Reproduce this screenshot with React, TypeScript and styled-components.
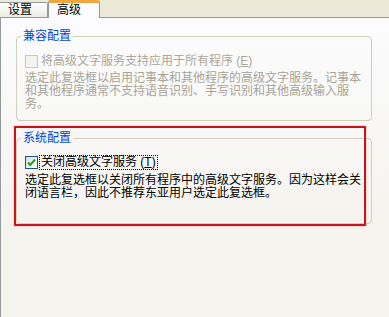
import styled, { createGlobalStyle } from "styled-components";

const GlobalStyle = createGlobalStyle`
  html, body {
    margin: 0;
    padding: 0;
    background: #f4f3ee;
  }
  body {
    font-family: "Liberation Sans", "Noto Sans CJK SC", sans-serif;
    font-size: 12px;
  }
`;

const Window = styled.div`
  width: 389px;
  height: 317px;
  overflow: hidden;
  display: flex;
  flex-direction: column;
  background: #ece9d8;
`;

const TabStrip = styled.div`
  display: flex;
  align-items: flex-end;
  height: 17px;
  border-bottom: 1px solid #919b9c;
  box-sizing: content-box;
`;

interface TabProps {
  $active?: boolean;
}

const Tab = styled.div<TabProps>`
  box-sizing: border-box;
  display: flex;
  align-items: center;
  padding-left: 8px;
  color: #000;
  line-height: 12px;
  border-right: 1px solid #919b9c;
  border-left: ${(p) => (p.$active ? "1px solid #919b9c" : "none")};
  border-top: ${(p) => (p.$active ? "3px solid #f2a640" : "1px solid #919b9c")};
  border-radius: ${(p) => (p.$active ? "2px 2px 0 0" : "0 2px 0 0")};
  width: ${(p) => (p.$active ? "52px" : "48px")};
  height: ${(p) => (p.$active ? "18px" : "15px")};
  margin-bottom: ${(p) => (p.$active ? "-1px" : "0")};
  padding-bottom: ${(p) => (p.$active ? "2px" : "0")};
  background: ${(p) =>
    p.$active ? "#fcfcfe" : "linear-gradient(#ffffff, #ecebe5)"};
  position: relative;
`;

const Panel = styled.div`
  position: relative;
  flex: 1;
  border-left: 1px solid #919b9c;
  background: linear-gradient(#fcfcfe, #f4f3ee 70%);
  padding: 12px 0 0 15px;
`;

interface GroupProps {
  $tall?: boolean;
}

const Group = styled.fieldset<GroupProps>`
  box-sizing: border-box;
  width: 356px;
  margin: 0 0 11px 0;
  border: 1px solid #d0d0bf;
  border-radius: 4px;
  padding: ${(p) => (p.$tall ? "11px 8px 23px 8px" : "12px 8px 9px 8px")};
`;

const Legend = styled.legend`
  margin-left: -4px;
  padding: 0 2px;
  color: #0046d5;
  line-height: 12px;
  font-size: 12px;
`;

const CheckRow = styled.div`
  display: flex;
  align-items: center;
  height: 15px;
`;

interface BoxProps {
  $disabled?: boolean;
}

const Box = styled.span<BoxProps>`
  box-sizing: border-box;
  width: 13px;
  height: 13px;
  flex: none;
  display: flex;
  align-items: center;
  justify-content: center;
  border: 1px solid ${(p) => (p.$disabled ? "#cac8bb" : "#1c5180")};
  background: ${(p) =>
    p.$disabled ? "#f4f3ee" : "linear-gradient(135deg, #dcdcd7, #ffffff)"};
  margin-right: 2px;
`;

interface LabelProps {
  $disabled?: boolean;
  $focused?: boolean;
  $gap?: number;
}

const Label = styled.span<LabelProps>`
  color: ${(p) => (p.$disabled ? "#aca899" : "#000")};
  line-height: 13px;
  padding: 0 1px;
  outline: ${(p) => (p.$focused ? "1px dotted #000" : "none")};
  white-space: nowrap;
`;

const Desc = styled.div<LabelProps>`
  margin-top: ${(p) => p.$gap ?? 3}px;
  display: flex;
  flex-direction: column;
  color: ${(p) => (p.$disabled ? "#a8a496" : "#000")};
`;

const Line = styled.div`
  height: 13px;
  line-height: 13px;
  white-space: nowrap;
`;

const Highlight = styled.div`
  position: absolute;
  left: 13px;
  top: 108px;
  width: 352px;
  height: 100px;
  box-sizing: border-box;
  border: 2px solid #c4161c;
  box-shadow: 0 0 2px rgba(255, 120, 120, 0.6);
  pointer-events: none;
`;

const Check = () => (
  <svg width="9" height="9" viewBox="0 0 9 9">
    <path
      d="M1 4.5 L3.3 7 L8 1.5"
      fill="none"
      stroke="#21a121"
      strokeWidth="2"
    />
  </svg>
);

const compatText = [
  "选定此复选框以启用记事本和其他程序的高级文字服务。记事本",
  "和其他程序通常不支持语音识别、手写识别和其他高级输入服",
  "务。",
];

const systemText = [
  "选定此复选框以关闭所有程序中的高级文字服务。因为这样会关",
  "闭语言栏，因此不推荐东亚用户选定此复选框。",
];

const App = () => {
  return (
    <>
      <GlobalStyle />
      <Window>
        <TabStrip>
          <Tab>设置</Tab>
          <Tab $active>高级</Tab>
        </TabStrip>
        <Panel>
          <Group>
            <Legend>兼容配置</Legend>
            <CheckRow>
              <Box $disabled />
              <Label $disabled>
                将高级文字服务支持应用于所有程序 (<u>E</u>)
              </Label>
            </CheckRow>
            <Desc $disabled>
              {compatText.map((line) => (
                <Line key={line}>{line}</Line>
              ))}
            </Desc>
          </Group>
          <Group $tall>
            <Legend>系统配置</Legend>
            <CheckRow>
              <Box>
                <Check />
              </Box>
              <Label $focused>
                关闭高级文字服务 (<u>T</u>)
              </Label>
            </CheckRow>
            <Desc $gap={4}>
              {systemText.map((line) => (
                <Line key={line}>{line}</Line>
              ))}
            </Desc>
          </Group>
          <Highlight />
        </Panel>
      </Window>
    </>
  );
};

export default App;
